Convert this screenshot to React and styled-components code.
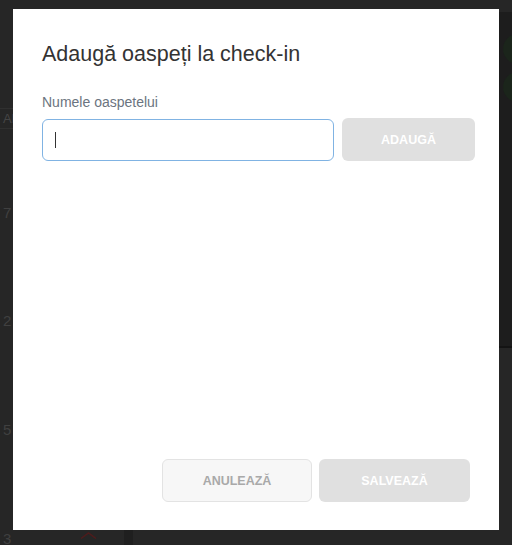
import React from "react";
import styled, { createGlobalStyle } from "styled-components";

const GlobalStyle = createGlobalStyle`
	html,
	body {
		margin: 0;
		padding: 0;
		background: #262626;
	}

	body {
		font-family: "Liberation Sans", Arial, sans-serif;
	}
`;

const Page = styled.div`
	position: relative;
	width: 512px;
	height: 545px;
	overflow: hidden;
	background: #262626;
`;

const Backdrop = styled.div`
	display: grid;
	grid-template-columns: 1fr 13px;
	height: 100%;
	padding-top: 12px;
	box-sizing: border-box;
`;

const Schedule = styled.div`
	padding-top: 96px;
`;

const HeaderRow = styled.div`
	height: 19px;
	line-height: 19px;
	padding-left: 3px;
	border-top: 1px solid #303030;
	border-bottom: 1px solid #303030;
	font-size: 13px;
	color: #454545;
`;

const HourRow = styled.div`
	display: grid;
	grid-template-columns: 30px 94px 9px 1fr;
	height: 108.67px;

	&:first-of-type {
		margin-top: 28.75px;
	}
`;

const HourLabel = styled.span`
	align-self: center;
	padding-left: 3px;
	font-size: 15px;
	color: #404040;
`;

const Slot = styled.div`
	padding-left: 50px;
	padding-top: 48px;

	svg {
		display: block;
	}
`;

const Divider = styled.div`
	background: #1f1f1f;
`;

const SidePanel = styled.div`
	height: 336px;
	background: #1d1d1d;
	border-bottom: 2px solid #141414;
	overflow: hidden;
	display: flex;
	flex-direction: column;
	gap: 8px;
	padding-top: 22px;
	box-sizing: border-box;
`;

const Avatar = styled.div`
	width: 30px;
	height: 30px;
	margin-left: 4px;
	border-radius: 50%;
	background: #1b251b;
	flex-shrink: 0;
`;

const Modal = styled.div`
	position: absolute;
	left: 13px;
	top: 9px;
	width: 486px;
	height: 521px;
	box-sizing: border-box;
	padding: 32px 29px 28px;
	display: flex;
	flex-direction: column;
	background: #fff;
`;

const Title = styled.h2`
	margin: 0;
	font-size: 21.5px;
	line-height: 26px;
	font-weight: 400;
	color: #333;
`;

const Label = styled.label`
	margin: 27px 0 7px;
	font-size: 14px;
	line-height: 17px;
	color: #6b7480;
`;

const InputRow = styled.div`
	display: flex;
	align-items: center;
	gap: 8px;
	margin-right: -5px;
`;

const Field = styled.div`
	width: 292px;
	height: 42px;
	box-sizing: border-box;
	display: flex;
	align-items: center;
	padding-left: 12px;
	border: 1px solid #80b3e3;
	border-radius: 6px;
`;

const Caret = styled.span`
	width: 1px;
	height: 16px;
	background: #333;
`;

const Button = styled.button`
	width: ${(p) => p.$width}px;
	height: 43px;
	box-sizing: border-box;
	border-radius: 6px;
	font-family: inherit;
	font-size: 12.5px;
	font-weight: 700;
	text-transform: uppercase;
	cursor: default;
	border: ${(p) => (p.$ghost ? "1px solid #e3e3e3" : "none")};
	background: ${(p) => (p.$ghost ? "#f7f7f7" : "#e0e0e0")};
	color: ${(p) => (p.$ghost ? "#a9a9a9" : "#fff")};
`;

const Footer = styled.div`
	margin-top: auto;
	display: flex;
	justify-content: flex-end;
	gap: 7px;
`;

const hours = ["7", "2", "5", "3"];

const App = () => {
	return (
		<Page>
			<GlobalStyle />
			<Backdrop>
				<Schedule>
					<HeaderRow>All day</HeaderRow>
					<div>
						{hours.map((h, i) => (
							<HourRow key={h}>
								<HourLabel>{h}</HourLabel>
								<Slot>
									{i === hours.length - 1 && (
										<svg width="17" height="7" viewBox="0 0 17 7">
											<polyline
												points="1,6.5 8.5,1 16,6.5"
												fill="none"
												stroke="#4e1c1c"
												strokeWidth="1.5"
											/>
										</svg>
									)}
								</Slot>
								<Divider />
							</HourRow>
						))}
					</div>
				</Schedule>
				<SidePanel>
					<Avatar />
					<Avatar />
				</SidePanel>
			</Backdrop>

			<Modal>
				<Title>Adaugă oaspeți la check-in</Title>
				<Label>Numele oaspetelui</Label>
				<InputRow>
					<Field>
						<Caret />
					</Field>
					<Button $width={133} disabled>
						Adaugă
					</Button>
				</InputRow>
				<Footer>
					<Button $width={150} $ghost>
						Anulează
					</Button>
					<Button $width={151} disabled>
						Salvează
					</Button>
				</Footer>
			</Modal>
		</Page>
	);
};

export default App;
